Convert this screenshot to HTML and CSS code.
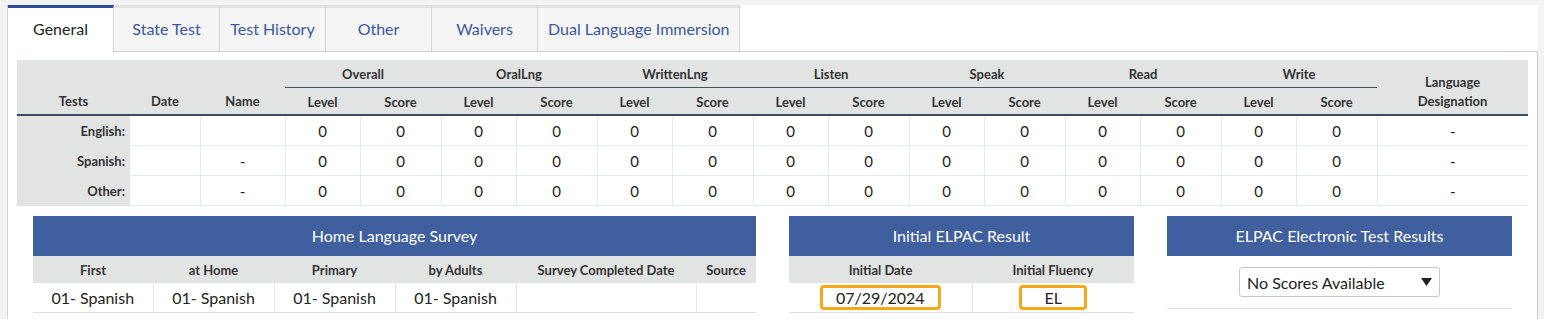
FILE: index.html
```html
<!DOCTYPE html>
<html lang="en">

<head>
  <meta charset="UTF-8" />
  <meta name="viewport" content="width=device-width, initial-scale=1.0" />
  <title>Student Language</title>
  <link rel="stylesheet" href="styles.css">
</head>

<body>

  <div class="panel">
    <ul class="tabs">
      <li class="tab active">General</li>
      <li class="tab">State Test</li>
      <li class="tab">Test History</li>
      <li class="tab">Other</li>
      <li class="tab">Waivers</li>
      <li class="tab">Dual Language Immersion</li>
    </ul>

    <div class="content">
      <table class="scores">
        <colgroup>
          <col class="c-tests"><col class="c-date"><col class="c-name">
          <col class="c-lvl"><col class="c-scr"><col class="c-lvl"><col class="c-scr">
          <col class="c-lvl"><col class="c-scr"><col class="c-lvl"><col class="c-scr">
          <col class="c-lvl"><col class="c-scr"><col class="c-lvl"><col class="c-scr">
          <col class="c-lvl"><col class="c-scr"><col class="c-desig">
        </colgroup>
        <thead>
          <tr class="groups">
            <th rowspan="2" class="low">Tests</th>
            <th rowspan="2" class="low">Date</th>
            <th rowspan="2" class="low">Name</th>
            <th colspan="2" class="group">Overall</th>
            <th colspan="2" class="group">OralLng</th>
            <th colspan="2" class="group">WrittenLng</th>
            <th colspan="2" class="group">Listen</th>
            <th colspan="2" class="group">Speak</th>
            <th colspan="2" class="group">Read</th>
            <th colspan="2" class="group">Write</th>
            <th rowspan="2" class="low">Language<br>Designation</th>
          </tr>
          <tr class="subs">
            <th>Level</th><th>Score</th><th>Level</th><th>Score</th>
            <th>Level</th><th>Score</th><th>Level</th><th>Score</th>
            <th>Level</th><th>Score</th><th>Level</th><th>Score</th>
            <th>Level</th><th>Score</th>
          </tr>
        </thead>
        <tbody>
          <tr>
            <th>English:</th><td></td><td></td>
            <td>0</td><td>0</td><td>0</td><td>0</td><td>0</td><td>0</td><td>0</td>
            <td>0</td><td>0</td><td>0</td><td>0</td><td>0</td><td>0</td><td>0</td>
            <td>-</td>
          </tr>
          <tr>
            <th>Spanish:</th><td></td><td>-</td>
            <td>0</td><td>0</td><td>0</td><td>0</td><td>0</td><td>0</td><td>0</td>
            <td>0</td><td>0</td><td>0</td><td>0</td><td>0</td><td>0</td><td>0</td>
            <td>-</td>
          </tr>
          <tr>
            <th>Other:</th><td></td><td>-</td>
            <td>0</td><td>0</td><td>0</td><td>0</td><td>0</td><td>0</td><td>0</td>
            <td>0</td><td>0</td><td>0</td><td>0</td><td>0</td><td>0</td><td>0</td>
            <td>-</td>
          </tr>
        </tbody>
      </table>

      <div class="cards">
        <div class="card">
          <h3>Home Language Survey</h3>
          <table class="mini">
            <colgroup>
              <col style="width:120px"><col style="width:121px"><col style="width:121px">
              <col style="width:121px"><col style="width:180px"><col>
            </colgroup>
            <tr>
              <th>First</th><th>at Home</th><th>Primary</th><th>by Adults</th>
              <th>Survey Completed Date</th><th>Source</th>
            </tr>
            <tr>
              <td>01- Spanish</td><td>01- Spanish</td><td>01- Spanish</td><td>01- Spanish</td>
              <td></td><td></td>
            </tr>
          </table>
        </div>

        <div class="card">
          <h3>Initial ELPAC Result</h3>
          <table class="mini">
            <colgroup>
              <col style="width:183px"><col>
            </colgroup>
            <tr>
              <th>Initial Date</th><th>Initial Fluency</th>
            </tr>
            <tr>
              <td><span class="mark date">07/29/2024</span></td>
              <td><span class="mark fluency">EL</span></td>
            </tr>
          </table>
        </div>

        <div class="card">
          <h3>ELPAC Electronic Test Results</h3>
          <div class="etr">
            <div class="select">
              <span>No Scores Available</span>
              <svg width="11" height="8" viewBox="0 0 11 8"><polygon points="0,0 11,0 5.5,8" fill="#222"/></svg>
            </div>
          </div>
        </div>
      </div>
    </div>
  </div>

</body>

</html>
```

FILE: styles.css
```css
body {
  margin: 0;
  background: #f3f3f3;
  font-family: Lato, "Noto Sans", sans-serif;
  color: #222;
}

.panel {
  margin: 5px 6px 0 7px;
  background: #fff;
  border-left: 1px solid #d2d2d2;
  height: 320px;
}

/* tabs */
.tabs {
  display: flex;
  list-style: none;
  margin: 0;
  padding: 0;
  border-bottom: 1px solid #cfcfcf;
}

.tab {
  box-sizing: border-box;
  min-width: 106px;
  height: 46px;
  padding: 0 10px 2px;
  display: flex;
  align-items: center;
  justify-content: center;
  background: #f5f5f5;
  border-top: 3px solid #e2e2e2;
  border-right: 1px solid #d4d4d4;
  color: #3b58a0;
  font-size: 16px;
}

.tab.active {
  background: #fff;
  border-top-color: #2c4c9b;
  color: #222;
  height: 47px;
  padding-bottom: 3px;
  margin-bottom: -1px;
}

.content {
  padding: 8px 9px 0 9px;
  border-right: 1px solid #cfcfcf;
  height: 260px;
}

/* main score table */
.scores {
  width: 100%;
  border-collapse: collapse;
  table-layout: fixed;
  font-size: 15px;
}

.c-tests { width: 113px; }
.c-date { width: 70px; }
.c-name { width: 85px; }
.c-lvl { width: 75px; }
.c-scr { width: 81px; }

.scores thead th {
  background: #e2e3e3;
  font-size: 13px;
  font-weight: bold;
  color: #333;
  padding: 0;
}

.scores .groups th {
  height: 27px;
}

.scores th.group {
  border-bottom: 1px solid #46526a;
  vertical-align: middle;
}

.scores th.low {
  vertical-align: bottom;
  padding-bottom: 3px;
  line-height: 19px;
}

.scores .subs th {
  height: 25px;
  padding-top: 1px;
}

.scores thead {
  border-bottom: 2px solid #3e4a60;
}

.scores tbody th {
  background: #e2e3e3;
  text-align: right;
  font-size: 13px;
  font-weight: bold;
  color: #333;
  padding: 0 5px 0 0;
  height: 29px;
}

.scores td {
  text-align: center;
  border-right: 1px solid #e6eaed;
  border-bottom: 1px solid #e6eaed;
  height: 29px;
  padding: 0;
}

.scores td:last-child {
  border-right: none;
}

/* lower cards */
.cards {
  display: grid;
  grid-template-columns: 723px 345px 345px;
  gap: 33px;
  padding: 0 16px;
  margin-top: 10px;
}

.card h3 {
  margin: 0;
  height: 40px;
  line-height: 40px;
  background: #405f9f;
  color: #fff;
  font-size: 16px;
  font-weight: normal;
  text-align: center;
}

.mini {
  width: 100%;
  border-collapse: collapse;
  table-layout: fixed;
}

.mini th {
  background: #e2e3e3;
  height: 27px;
  padding: 0;
  font-size: 13px;
  font-weight: bold;
  color: #333;
}

.mini td {
  height: 29px;
  padding: 0;
  text-align: center;
  font-size: 16px;
  border-right: 1px solid #e6eaed;
  border-bottom: 1px solid #dedede;
}

.mini td:last-child {
  border-right: none;
}

.mark {
  box-sizing: border-box;
  display: inline-block;
  height: 25px;
  line-height: 19px;
  border: 3px solid #f5a81c;
  border-radius: 4px;
  vertical-align: middle;
}

.mark.date {
  width: 121px;
}

.mark.fluency {
  width: 68px;
}

.etr {
  padding: 11px 0;
  border-bottom: 1px solid #dcdcdc;
}

.select {
  box-sizing: border-box;
  width: 201px;
  height: 30px;
  margin: 0 auto;
  padding: 0 7px;
  display: flex;
  align-items: center;
  justify-content: space-between;
  border: 1px solid #c6c6c6;
  border-radius: 3px;
  font-size: 16px;
}
```
